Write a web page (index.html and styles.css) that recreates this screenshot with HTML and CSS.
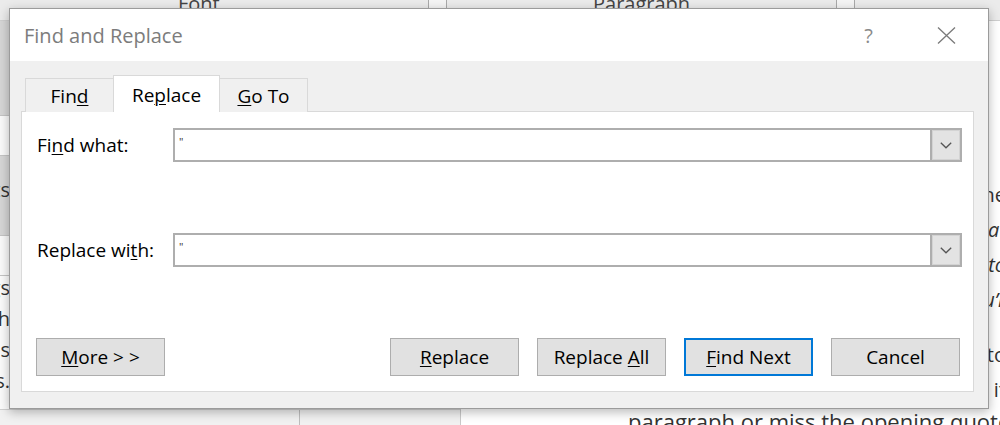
FILE: index.html
```html
<!DOCTYPE html>
<html>
<head>
<meta charset="utf-8">
<link rel="stylesheet" href="styles.css">
</head>
<body>
<div class="desktop">
  <div class="ribbon">
    <div class="rgroup rg-font"><span class="rlabel">Font</span><span class="launcher"></span></div>
    <div class="rgroup rg-para"><span class="rlabel">Paragraph</span><span class="launcher"></span></div>
    <div class="rgroup rg-rest"></div>
  </div>
  <div class="workspace">
    <div class="leftpane">
      <div class="band band-gray"></div>
      <div class="band band-white"></div>
      <div class="band band-gray band-tall"><div class="clip"><span>Posts</span></div></div>
      <div class="band band-white"></div>
      <div class="band band-list">
        <div class="clip"><span>Headings</span></div>
        <div class="clip"><span>Each</span></div>
        <div class="clip"><span>Status</span></div>
        <div class="clip"><span>Results.</span></div>
      </div>
      <div class="band band-foot"><div class="footcell"></div><div class="footcell wide"></div></div>
    </div>
    <div class="doc">
      <div class="para">
        <div class="dline"><span>quotes are used to denote the</span></div>
        <div class="dline"><em>say what</em></div>
        <div class="dline"><em>often to</em></div>
        <div class="dline"><em>you’r</em></div>
      </div>
      <div class="para">
        <div class="dline"><span>to</span></div>
        <div class="dline"><span>it</span></div>
        <div class="dline dl-first"><span>paragraph or miss the opening quotes in a</span></div>
      </div>
    </div>
  </div>

  <div class="dialog">
    <div class="titlebar">
      <span class="title">Find and Replace</span>
      <span class="help">?</span>
      <svg class="close" width="19" height="17" viewBox="0 0 19 17"><path d="M1 0.5 L18 16.5 M18 0.5 L1 16.5" stroke="#7a7a7a" stroke-width="1.3" fill="none"/></svg>
    </div>
    <div class="dbody">
      <div class="tabs">
        <div class="tab tab-find">Fin<u>d</u></div>
        <div class="tab tab-replace active">Re<u>p</u>lace</div>
        <div class="tab tab-goto"><u>G</u>o To</div>
      </div>
      <div class="panel">
        <div class="row">
          <label class="lbl">Fi<u>n</u>d what:</label>
          <div class="combo"><span class="val">"</span><span class="drop"><svg width="12" height="7" viewBox="0 0 12 7"><path d="M0.8 0.8 L6 5.8 L11.2 0.8" stroke="#555" stroke-width="1.3" fill="none"/></svg></span></div>
        </div>
        <div class="row row2">
          <label class="lbl">Replace wi<u>t</u>h:</label>
          <div class="combo"><span class="val">"</span><span class="drop"><svg width="12" height="7" viewBox="0 0 12 7"><path d="M0.8 0.8 L6 5.8 L11.2 0.8" stroke="#555" stroke-width="1.3" fill="none"/></svg></span></div>
        </div>
        <div class="buttons">
          <button class="btn"><u>M</u>ore &gt; &gt;</button>
          <div class="spacer"></div>
          <button class="btn"><u>R</u>eplace</button>
          <button class="btn">Replace <u>A</u>ll</button>
          <button class="btn default"><u>F</u>ind Next</button>
          <button class="btn">Cancel</button>
        </div>
      </div>
    </div>
  </div>
</div>
</body>
</html>
```

FILE: styles.css
```css
* { box-sizing: border-box; }
html, body { margin: 0; padding: 0; }
body {
  font-family: "Open Sans", "Noto Sans", sans-serif;
  background: #fff;
}
.desktop {
  position: relative;
  width: 1000px;
  height: 425px;
  overflow: hidden;
  display: flex;
  flex-direction: column;
  background: #fff;
}

/* ---------- background ribbon ---------- */
.ribbon {
  height: 21px;
  flex: none;
  display: flex;
  background: #ebebeb;
  border-bottom: 1px solid #cfcfcf;
}
.rgroup {
  position: relative;
  display: flex;
  overflow: hidden;
}
.rg-font { width: 461px; padding-left: 178px; }
.rg-para { width: 397px; padding-left: 132px; }
.rg-rest { flex: 1; }
.rlabel {
  font-size: 20px;
  line-height: 26px;
  margin-top: -9px;
  color: #444;
  white-space: nowrap;
}
.launcher {
  margin-left: auto;
  width: 19px;
  height: 14px;
  border: 1px solid #a9a9a9;
  border-top: none;
  background: #f4f4f4;
}
.rg-font .launcher { margin-right: 14px; }
.rg-para .launcher { margin-right: 3px; }

/* ---------- background workspace ---------- */
.workspace {
  flex: 1;
  display: flex;
  min-height: 0;
}
.leftpane {
  width: 461px;
  flex: none;
  display: flex;
  flex-direction: column;
  border-right: 1px solid #c9c9c9;
  background: #f5f5f5;
  font-size: 20px;
  color: #333;
}
.band { border-bottom: 1px solid #c4c4c4; }
.band-gray { height: 95px; background: #d6d6d6; }
.band-white { height: 40px; background: #fafafa; }
.band-tall { height: 80px; padding-top: 20px; }
.band-list {
  flex: 1;
  background: #fbfbfb;
  border-bottom: none;
  display: flex;
  flex-direction: column;
}
.band-list .clip { height: 31px; line-height: 31px; }
.band-list .clip:first-child { margin-top: -4px; }
.band-foot {
  height: 16px;
  flex: none;
  display: flex;
  background: #f1f1f1;
  border-top: 1px solid #d0d0d0;
  border-bottom: none;
}
.footcell { width: 300px; border-right: 1px solid #bdbdbd; }
.footcell.wide { flex: 1; border-right: none; }
.clip {
  width: 10px;
  display: flex;
  justify-content: flex-end;
  overflow: hidden;
  white-space: nowrap;
  line-height: 28px;
}
.doc {
  flex: 1;
  min-width: 0;
  margin-right: -6px;
  padding-top: 156px;
  font-size: 20px;
  color: #333;
  overflow: hidden;
}
.para + .para { margin-top: 20px; }
.dline {
  height: 35px;
  line-height: 35px;
  display: flex;
  justify-content: flex-end;
  white-space: nowrap;
}
.dline em { font-style: italic; }
.dline.dl-first {
  justify-content: flex-start;
  padding-left: 167px;
  line-height: 28px;
  font-size: 22px;
}

/* ---------- dialog ---------- */
.dialog {
  position: absolute;
  left: 9px;
  top: 8px;
  width: 980px;
  height: 401px;
  border: 1px solid #9b9b9b;
  background: #f0f0f0;
  box-shadow: 0 3px 10px rgba(0, 0, 0, 0.28);
  display: flex;
  flex-direction: column;
}
.titlebar {
  height: 52px;
  flex: none;
  background: #fff;
  display: flex;
  align-items: center;
  padding-left: 14px;
  padding-right: 32px;
}
.title {
  font-size: 20px;
  color: #7c7c7c;
}
.help {
  margin-left: auto;
  font-size: 20px;
  color: #8a8a8a;
  margin-right: 64px;
}
.close { display: block; }

.dbody {
  flex: 1;
  display: flex;
  flex-direction: column;
  padding: 14px 14px 16px 11px;
}
.tabs {
  display: flex;
  align-items: flex-end;
  padding-left: 4px;
  height: 37px;
  flex: none;
  position: relative;
  z-index: 1;
  margin-bottom: -1px;
}
.tab {
  height: 34px;
  display: flex;
  align-items: flex-end;
  justify-content: center;
  padding-bottom: 3px;
  font-size: 19px;
  line-height: 26px;
  color: #000;
  background: #f0f0f0;
  border: 1px solid #d9d9d9;
  border-bottom: none;
}
.tab-find { width: 88px; border-right: none; }
.tab-replace { width: 107px; }
.tab-goto { width: 88px; border-left: none; }
.tab.active {
  height: 37px;
  background: #fff;
  padding-bottom: 4px;
}
.tab u, .lbl u, .btn u { text-underline-offset: 2px; text-decoration-thickness: 1px; }

.panel {
  flex: 1;
  background: #fff;
  border: 1px solid #d9d9d9;
  padding: 16px 11px 15px 14px;
  display: flex;
  flex-direction: column;
}
.row {
  display: flex;
  align-items: center;
  height: 34px;
}
.row2 { margin-top: 71px; }
.lbl {
  width: 137px;
  flex: none;
  padding-left: 1px;
  font-size: 19px;
  color: #000;
}
.combo {
  flex: 1;
  height: 34px;
  display: flex;
  border: 2px solid #aeaeae;
  background: #fff;
}
.val {
  flex: 1;
  font-size: 11px;
  line-height: 11px;
  padding-left: 4px;
  padding-top: 6px;
  color: #333;
}
.drop {
  width: 30px;
  flex: none;
  display: flex;
  align-items: center;
  justify-content: center;
  background: #e3e3e3;
  border-left: 2px solid #aeaeae;
  box-shadow: inset 0 0 0 1px #d3d3d3;
}
.drop svg { display: block; margin-top: 1px; }

.buttons {
  display: flex;
  margin-top: 71px;
  padding-right: 2px;
  gap: 18px;
}
.spacer { flex: 1; }
.btn {
  width: 129px;
  height: 38px;
  flex: none;
  padding: 0;
  margin: 0;
  font-family: "Open Sans", "Noto Sans", sans-serif;
  font-size: 19px;
  color: #000;
  background: #e1e1e1;
  border: 1px solid #adadad;
  border-radius: 0;
}
.btn.default { border: 2px solid #0078d7; }
```
